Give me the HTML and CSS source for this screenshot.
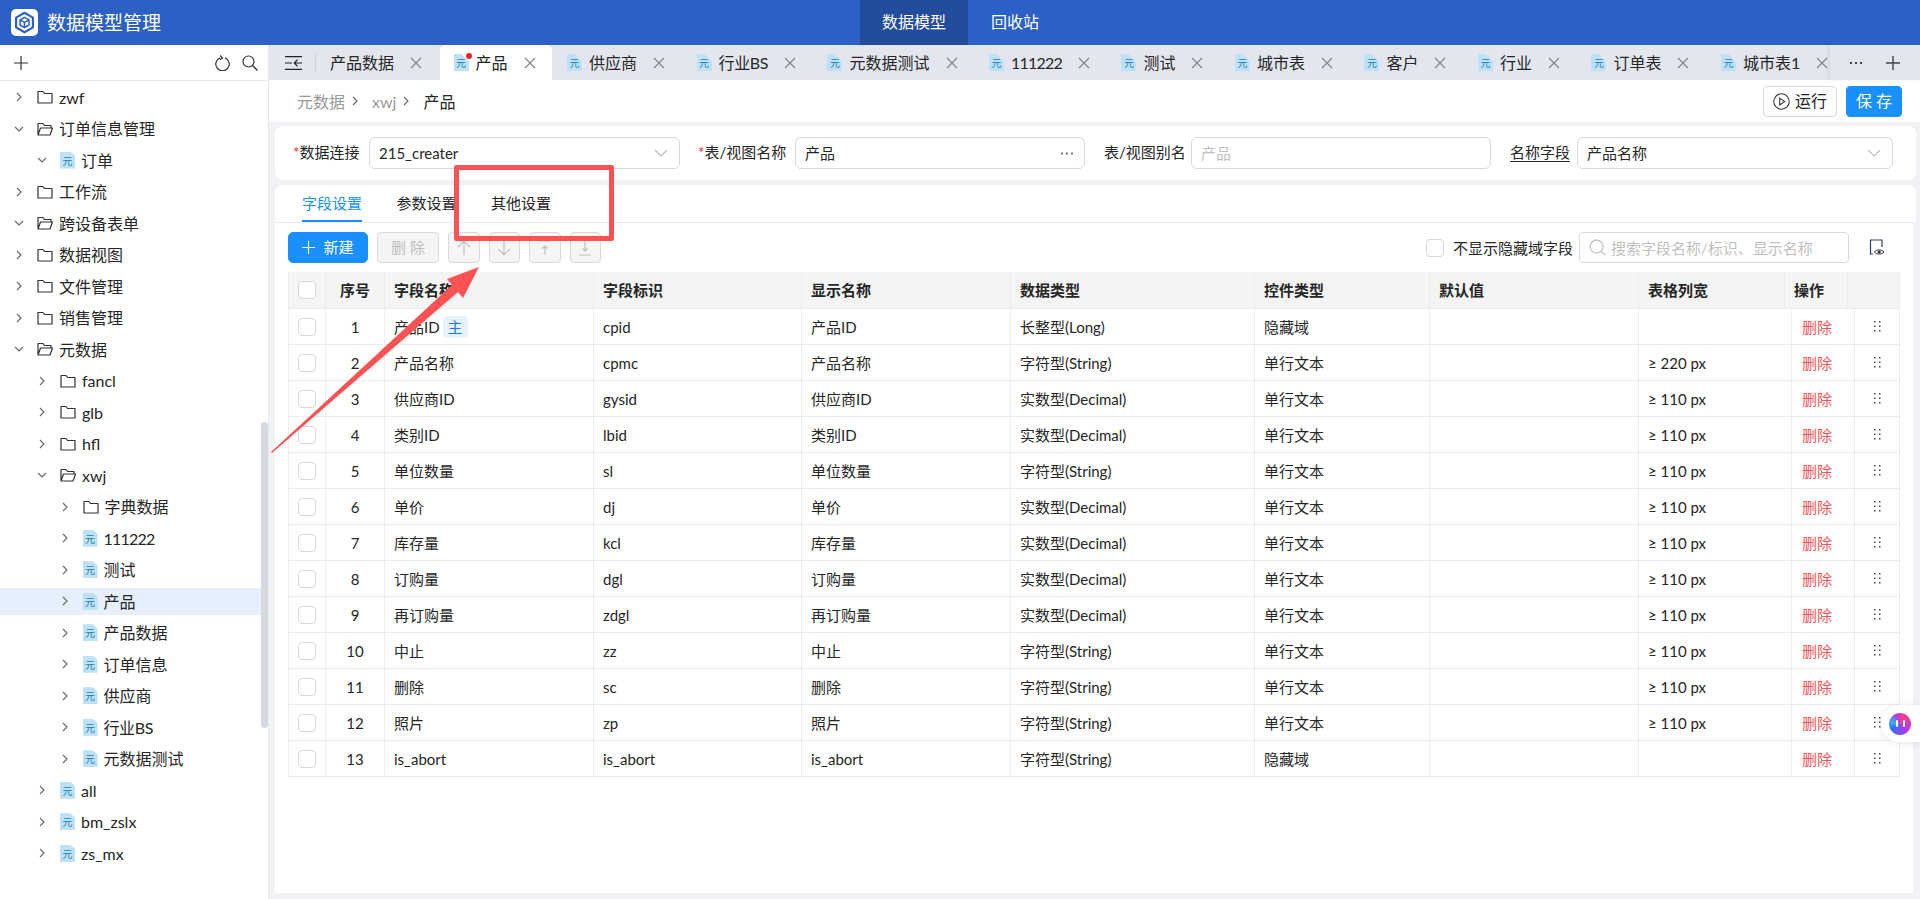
FILE: index.html
```html
<!DOCTYPE html>
<html lang="zh">
<head>
<meta charset="utf-8">
<title>数据模型管理</title>
<link rel="stylesheet" href="styles.css">
</head>
<body>
<svg class="defs" width="0" height="0">
  <symbol id="r" viewBox="0 0 6 10"><path d="M1 1l4 4-4 4" fill="none" stroke="#666" stroke-width="1.1"/></symbol>
  <symbol id="d" viewBox="0 0 10 6"><path d="M1 1l4 4 4-4" fill="none" stroke="#666" stroke-width="1.1"/></symbol>
  <symbol id="f" viewBox="0 0 16 14"><path d="M1 13V1.5h5l1.5 2H15V13z" fill="none" stroke="#333" stroke-width="1.2" stroke-linejoin="round"/></symbol>
  <symbol id="o" viewBox="0 0 16 14"><path d="M1 13V1.5h5l1.5 2H14V6M1 13l2.5-7H15.500l-2.500 7z" fill="none" stroke="#333" stroke-width="1.2" stroke-linejoin="round"/></symbol>
  <symbol id="x" viewBox="0 0 12 12"><path d="M1 1l10 10M11 1L1 11" fill="none" stroke="#858585" stroke-width="1.2"/></symbol>
  <symbol id="dots" viewBox="0 0 8 12"><path d="M1 1h1.500v1.500H1zM6 1h1.500v1.500H6zM1 5.500h1.500V7H1zM6 5.500h1.500V7H6zM1 10h1.500v1.500H1zM6 10h1.500v1.500H6z" fill="#444"/></symbol>
  <symbol id="cv" viewBox="0 0 14 8"><path d="M1 1l6 6 6-6" fill="none" stroke="#bbb" stroke-width="1.100"/></symbol>
</svg>

<header class="top">
  <div class="brand">
    <svg class="logo" viewBox="0 0 27 27">
      <rect width="27" height="27" rx="5" fill="#fff"/>
      <path d="M13.500 3.800l8.400 4.800v9.800l-8.400 4.800-8.400-4.800V8.600z" fill="none" stroke="#2b60c4" stroke-width="2.200" stroke-linejoin="round"/>
      <path d="M13.500 8.300l4.500 2.500v5.200l-4.500 2.600L9 16V10.800zM9 10.800l4.500 2.600 4.500-2.600M13.500 13.400v5.200" fill="none" stroke="#2b60c4" stroke-width="1.500" stroke-linejoin="round"/>
    </svg>
    <span class="title">数据模型管理</span>
  </div>
  <nav class="nav"><a class="nav-i on">数据模型</a><a class="nav-i">回收站</a></nav>
</header>

<div class="app">
  <aside class="side">
    <div class="side-head">
      <svg class="ic14" viewBox="0 0 14 14"><path d="M7 0v14M0 7h14" stroke="#333" stroke-width="1.200"/></svg>
      <span class="fill"></span>
      <svg class="ic16" viewBox="0 0 16 16"><path d="M5 2.900a6.700 6.700 0 1 0 5 0M5.200 0.500L7.500 3 5 4.800" fill="none" stroke="#333" stroke-width="1.200"/></svg>
      <svg class="ic16" viewBox="0 0 16 16"><circle cx="6.500" cy="6.500" r="5.500" fill="none" stroke="#333" stroke-width="1.200"/><path d="M10.500 10.500l5 5" stroke="#333" stroke-width="1.400"/></svg>
    </div>
    <ul class="tree">
      <li class="n l0"><svg class="ch"><use href="#r"/></svg><svg class="fo"><use href="#f"/></svg><span>zwf</span></li>
      <li class="n l0"><svg class="ch dn"><use href="#d"/></svg><svg class="fo"><use href="#o"/></svg><span>订单信息管理</span></li>
      <li class="n l1"><svg class="ch dn"><use href="#d"/></svg><i class="yuan">元</i><span>订单</span></li>
      <li class="n l0"><svg class="ch"><use href="#r"/></svg><svg class="fo"><use href="#f"/></svg><span>工作流</span></li>
      <li class="n l0"><svg class="ch dn"><use href="#d"/></svg><svg class="fo"><use href="#o"/></svg><span>跨设备表单</span></li>
      <li class="n l0"><svg class="ch"><use href="#r"/></svg><svg class="fo"><use href="#f"/></svg><span>数据视图</span></li>
      <li class="n l0"><svg class="ch"><use href="#r"/></svg><svg class="fo"><use href="#f"/></svg><span>文件管理</span></li>
      <li class="n l0"><svg class="ch"><use href="#r"/></svg><svg class="fo"><use href="#f"/></svg><span>销售管理</span></li>
      <li class="n l0"><svg class="ch dn"><use href="#d"/></svg><svg class="fo"><use href="#o"/></svg><span>元数据</span></li>
      <li class="n l1"><svg class="ch"><use href="#r"/></svg><svg class="fo"><use href="#f"/></svg><span>fancl</span></li>
      <li class="n l1"><svg class="ch"><use href="#r"/></svg><svg class="fo"><use href="#f"/></svg><span>glb</span></li>
      <li class="n l1"><svg class="ch"><use href="#r"/></svg><svg class="fo"><use href="#f"/></svg><span>hfl</span></li>
      <li class="n l1"><svg class="ch dn"><use href="#d"/></svg><svg class="fo"><use href="#o"/></svg><span>xwj</span></li>
      <li class="n l2"><svg class="ch"><use href="#r"/></svg><svg class="fo"><use href="#f"/></svg><span>字典数据</span></li>
      <li class="n l2"><svg class="ch"><use href="#r"/></svg><i class="yuan">元</i><span class="dg">111222</span></li>
      <li class="n l2"><svg class="ch"><use href="#r"/></svg><i class="yuan">元</i><span>测试</span></li>
      <li class="n l2 sel"><svg class="ch"><use href="#r"/></svg><i class="yuan">元</i><span>产品</span></li>
      <li class="n l2"><svg class="ch"><use href="#r"/></svg><i class="yuan">元</i><span>产品数据</span></li>
      <li class="n l2"><svg class="ch"><use href="#r"/></svg><i class="yuan">元</i><span>订单信息</span></li>
      <li class="n l2"><svg class="ch"><use href="#r"/></svg><i class="yuan">元</i><span>供应商</span></li>
      <li class="n l2"><svg class="ch"><use href="#r"/></svg><i class="yuan">元</i><span class="ns">行业BS</span></li>
      <li class="n l2"><svg class="ch"><use href="#r"/></svg><i class="yuan">元</i><span>元数据测试</span></li>
      <li class="n l1"><svg class="ch"><use href="#r"/></svg><i class="yuan">元</i><span>all</span></li>
      <li class="n l1"><svg class="ch"><use href="#r"/></svg><i class="yuan">元</i><span>bm_zslx</span></li>
      <li class="n l1"><svg class="ch"><use href="#r"/></svg><i class="yuan">元</i><span>zs_mx</span></li>
    </ul>
    <div class="thumb"></div>
  </aside>

  <main class="main">
    <div class="tabbar">
      <div class="tb-left">
        <svg class="collapse" viewBox="0 0 17 14"><path d="M0 .700h17M0 13.300h17M0 7h7M9.500 7H17M12.500 3.700L9.300 7l3.200 3.300" fill="none" stroke="#222" stroke-width="1.200"/></svg>
        <span class="tb-sep"></span>
      </div>
      <div class="tabs">
        <div class="tab first"><span>产品数据</span><svg class="cl"><use href="#x"/></svg></div>
        <div class="tab on"><i class="yuan"><b class="dot"></b>元</i><span>产品</span><svg class="cl"><use href="#x"/></svg></div>
        <div class="tab"><i class="yuan">元</i><span>供应商</span><svg class="cl"><use href="#x"/></svg></div>
        <div class="tab"><i class="yuan">元</i><span class="ns">行业BS</span><svg class="cl"><use href="#x"/></svg></div>
        <div class="tab"><i class="yuan">元</i><span>元数据测试</span><svg class="cl"><use href="#x"/></svg></div>
        <div class="tab"><i class="yuan">元</i><span class="dg">111222</span><svg class="cl"><use href="#x"/></svg></div>
        <div class="tab"><i class="yuan">元</i><span>测试</span><svg class="cl"><use href="#x"/></svg></div>
        <div class="tab"><i class="yuan">元</i><span>城市表</span><svg class="cl"><use href="#x"/></svg></div>
        <div class="tab"><i class="yuan">元</i><span>客户</span><svg class="cl"><use href="#x"/></svg></div>
        <div class="tab"><i class="yuan">元</i><span>行业</span><svg class="cl"><use href="#x"/></svg></div>
        <div class="tab"><i class="yuan">元</i><span>订单表</span><svg class="cl"><use href="#x"/></svg></div>
        <div class="tab"><i class="yuan">元</i><span>城市表1</span><svg class="cl"><use href="#x"/></svg></div>
      </div>
      <div class="tb-right">
        <svg class="more" viewBox="0 0 14 4"><path d="M1 1h2v2H1zM6 1h2v2H6zM11 1h2v2h-2z" fill="#444"/></svg>
        <svg class="ic14" viewBox="0 0 14 14"><path d="M7 0v14M0 7h14" stroke="#444" stroke-width="1.400"/></svg>
      </div>
    </div>

    <div class="crumbs">
      <span class="c-g">元数据</span><svg class="c-ch"><use href="#r"/></svg>
      <span class="c-g">xwj</span><svg class="c-ch"><use href="#r"/></svg>
      <span class="c-d">产品</span>
      <span class="fill"></span>
      <button class="btn run"><svg class="play" viewBox="0 0 16 16"><circle cx="8" cy="8" r="7.300" fill="none" stroke="#333"/><path d="M6.300 4.800l4.700 3.200-4.700 3.200z" fill="none" stroke="#333"/></svg>运行</button>
      <button class="btn save">保 存</button>
    </div>

    <section class="form">
      <label class="lab lw1"><em>*</em>数据连接</label>
      <div class="inp w1"><span>215_creater</span><svg class="cv"><use href="#cv"/></svg></div>
      <label class="lab lw2"><em>*</em>表/视图名称</label>
      <div class="inp w2"><span>产品</span><svg class="el" viewBox="0 0 12 3"><path d="M0 .500h2v2H0zM5 .500h2v2H5zM10 .500h2v2h-2z" fill="#777"/></svg></div>
      <label class="lab lw3">表/视图别名</label>
      <div class="inp w3"><span class="ph">产品</span></div>
      <label class="lab lw4"><u>名称字段</u></label>
      <div class="inp w4"><span>产品名称</span><svg class="cv"><use href="#cv"/></svg></div>
    </section>

    <section class="panel">
      <div class="ptabs">
        <a class="pt on">字段设置</a><a class="pt">参数设置</a><a class="pt">其他设置</a>
      </div>
      <div class="pbody">
        <div class="tools">
          <button class="btn add"><svg class="ic13" viewBox="0 0 14 14"><path d="M7 0v14M0 7h14" stroke="#fff" stroke-width="1.300"/></svg>新建</button>
          <button class="btn dis del">删 除</button>
          <button class="btn dis sq"><svg class="ic16" viewBox="0 0 16 16"><path d="M8 15V1M2 7l6-6 6 6" fill="none" stroke="#bfbfbf" stroke-width="1.200"/></svg></button>
          <button class="btn dis sq"><svg class="ic16" viewBox="0 0 16 16"><path d="M8 1v14M2 9l6 6 6-6" fill="none" stroke="#bfbfbf" stroke-width="1.200"/></svg></button>
          <button class="btn dis sq"><svg class="ic16" viewBox="0 0 16 16"><path d="M2 1h12M8 15V6M5.500 8.500L8 6l2.500 2.500" fill="none" stroke="#bfbfbf" stroke-width="1.200"/></svg></button>
          <button class="btn dis sq"><svg class="ic16" viewBox="0 0 16 16"><path d="M2 15h12M8 1v10M5.500 8.500L8 11l2.500-2.500" fill="none" stroke="#bfbfbf" stroke-width="1.200"/></svg></button>
          <span class="fill"></span>
          <i class="cb"></i><span class="hide-l">不显示隐藏域字段</span>
          <div class="search">
            <svg class="s-ic" viewBox="0 0 18 18"><circle cx="8" cy="8" r="6.800" fill="none" stroke="#bfbfbf" stroke-width="1.200"/><path d="M13 13l4 4" stroke="#bfbfbf" stroke-width="1.300"/></svg>
            <span>搜索字段名称/标识、显示名称</span>
          </div>
          <svg class="view" viewBox="0 0 16 17"><path d="M4 15H1.500V1h11.500v7" fill="none" stroke="#2c3e66" stroke-width="1.200"/><path d="M5.500 13c1.600-2.700 7.400-2.700 9.500 0-2.100 2.700-7.900 2.700-9.500 0z" fill="#fff" stroke="#333"/><circle cx="10.200" cy="13" r="1.600" fill="#333"/></svg>
        </div>

        <div class="grid">
          <div class="row head">
            <div class="c ck"><i class="cb"></i></div><div class="c ctr">序号</div><div class="c">字段名称</div><div class="c">字段标识</div><div class="c">显示名称</div><div class="c">数据类型</div><div class="c">控件类型</div><div class="c">默认值</div><div class="c">表格列宽</div><div class="c">操作</div><div class="c"></div>
          </div>
          <div class="row"><div class="c ck"><i class="cb"></i></div><div class="c ctr">1</div><div class="c">产品ID<b class="zhu">主</b></div><div class="c">cpid</div><div class="c">产品ID</div><div class="c">长整型(Long)</div><div class="c">隐藏域</div><div class="c"></div><div class="c"></div><div class="c del-t">删除</div><div class="c ctr"><svg class="dr"><use href="#dots"/></svg></div></div>
          <div class="row"><div class="c ck"><i class="cb"></i></div><div class="c ctr">2</div><div class="c">产品名称</div><div class="c">cpmc</div><div class="c">产品名称</div><div class="c">字符型(String)</div><div class="c">单行文本</div><div class="c"></div><div class="c">≥ 220 px</div><div class="c del-t">删除</div><div class="c ctr"><svg class="dr"><use href="#dots"/></svg></div></div>
          <div class="row"><div class="c ck"><i class="cb"></i></div><div class="c ctr">3</div><div class="c">供应商ID</div><div class="c">gysid</div><div class="c">供应商ID</div><div class="c">实数型(Decimal)</div><div class="c">单行文本</div><div class="c"></div><div class="c">≥ 110 px</div><div class="c del-t">删除</div><div class="c ctr"><svg class="dr"><use href="#dots"/></svg></div></div>
          <div class="row"><div class="c ck"><i class="cb"></i></div><div class="c ctr">4</div><div class="c">类别ID</div><div class="c">lbid</div><div class="c">类别ID</div><div class="c">实数型(Decimal)</div><div class="c">单行文本</div><div class="c"></div><div class="c">≥ 110 px</div><div class="c del-t">删除</div><div class="c ctr"><svg class="dr"><use href="#dots"/></svg></div></div>
          <div class="row"><div class="c ck"><i class="cb"></i></div><div class="c ctr">5</div><div class="c">单位数量</div><div class="c">sl</div><div class="c">单位数量</div><div class="c">字符型(String)</div><div class="c">单行文本</div><div class="c"></div><div class="c">≥ 110 px</div><div class="c del-t">删除</div><div class="c ctr"><svg class="dr"><use href="#dots"/></svg></div></div>
          <div class="row"><div class="c ck"><i class="cb"></i></div><div class="c ctr">6</div><div class="c">单价</div><div class="c">dj</div><div class="c">单价</div><div class="c">实数型(Decimal)</div><div class="c">单行文本</div><div class="c"></div><div class="c">≥ 110 px</div><div class="c del-t">删除</div><div class="c ctr"><svg class="dr"><use href="#dots"/></svg></div></div>
          <div class="row"><div class="c ck"><i class="cb"></i></div><div class="c ctr">7</div><div class="c">库存量</div><div class="c">kcl</div><div class="c">库存量</div><div class="c">实数型(Decimal)</div><div class="c">单行文本</div><div class="c"></div><div class="c">≥ 110 px</div><div class="c del-t">删除</div><div class="c ctr"><svg class="dr"><use href="#dots"/></svg></div></div>
          <div class="row"><div class="c ck"><i class="cb"></i></div><div class="c ctr">8</div><div class="c">订购量</div><div class="c">dgl</div><div class="c">订购量</div><div class="c">实数型(Decimal)</div><div class="c">单行文本</div><div class="c"></div><div class="c">≥ 110 px</div><div class="c del-t">删除</div><div class="c ctr"><svg class="dr"><use href="#dots"/></svg></div></div>
          <div class="row"><div class="c ck"><i class="cb"></i></div><div class="c ctr">9</div><div class="c">再订购量</div><div class="c">zdgl</div><div class="c">再订购量</div><div class="c">实数型(Decimal)</div><div class="c">单行文本</div><div class="c"></div><div class="c">≥ 110 px</div><div class="c del-t">删除</div><div class="c ctr"><svg class="dr"><use href="#dots"/></svg></div></div>
          <div class="row"><div class="c ck"><i class="cb"></i></div><div class="c ctr">10</div><div class="c">中止</div><div class="c">zz</div><div class="c">中止</div><div class="c">字符型(String)</div><div class="c">单行文本</div><div class="c"></div><div class="c">≥ 110 px</div><div class="c del-t">删除</div><div class="c ctr"><svg class="dr"><use href="#dots"/></svg></div></div>
          <div class="row"><div class="c ck"><i class="cb"></i></div><div class="c ctr">11</div><div class="c">删除</div><div class="c">sc</div><div class="c">删除</div><div class="c">字符型(String)</div><div class="c">单行文本</div><div class="c"></div><div class="c">≥ 110 px</div><div class="c del-t">删除</div><div class="c ctr"><svg class="dr"><use href="#dots"/></svg></div></div>
          <div class="row"><div class="c ck"><i class="cb"></i></div><div class="c ctr">12</div><div class="c">照片</div><div class="c">zp</div><div class="c">照片</div><div class="c">字符型(String)</div><div class="c">单行文本</div><div class="c"></div><div class="c">≥ 110 px</div><div class="c del-t">删除</div><div class="c ctr"><svg class="dr"><use href="#dots"/></svg></div></div>
          <div class="row"><div class="c ck"><i class="cb"></i></div><div class="c ctr">13</div><div class="c">is_abort</div><div class="c">is_abort</div><div class="c">is_abort</div><div class="c">字符型(String)</div><div class="c">隐藏域</div><div class="c"></div><div class="c"></div><div class="c del-t">删除</div><div class="c ctr"><svg class="dr"><use href="#dots"/></svg></div></div>
        </div>
      </div>
    </section>
  </main>
</div>

<div class="ai-pill"><span class="ai-ball"><i></i><i></i></span></div>
<div class="mark-box"></div>
<svg class="mark-arrow" viewBox="0 0 1920 899"><polygon points="479,267 447,279 452,285 271,452 272,453 458,292 463,298" fill="#fb5254"/></svg>
</body>
</html>
```
FILE: styles.css
```css
* { box-sizing: border-box; }
html, body { margin: 0; height: 899px; overflow: hidden; }
body {
  font-family: "Lato", "Noto Sans CJK SC", sans-serif;
  font-size: 15px;
  color: #262626;
  background: #f0f2f6;
  position: relative;
}
.defs { position: absolute; }
.fill { flex: 1; }
i, em, b { font-style: normal; font-weight: normal; }
.dg { letter-spacing: -.8px; }
.ns { letter-spacing: -.4px; }

/* top bar */
.top { height: 45px; background: #2b60c4; display: flex; color: #fff; position: relative; }
.brand { display: flex; align-items: center; padding-left: 11px; }
.logo { width: 27px; height: 27px; }
.title { font-size: 19px; margin-left: 9px; line-height: 27px; }
.nav { position: absolute; left: 860px; top: 0; height: 45px; display: flex; }
.nav-i { padding: 0 23px; line-height: 43px; font-size: 16px; }
.nav-i.on { padding: 0 22px; background: #244c9c; }

.app { display: flex; height: 854px; }

/* sidebar */
.side { width: 269px; flex: none; background: #fff; border-right: 1px solid #e8e8e8; position: relative; }
.side-head { height: 36px; border-bottom: 1px solid #e8e8e8; display: flex; align-items: center; padding: 0 10px 0 14px; gap: 11px; }
.ic14 { width: 14px; height: 14px; }
.ic16 { width: 16px; height: 16px; }
.ic13 { width: 13px; height: 13px; }
.tree { list-style: none; margin: 0; padding: 2.5px 7px 0 0; font-size: 16px; }
.n { height: 27px; margin-bottom: 4.53px; display: flex; align-items: center; line-height: 27px; white-space: nowrap; }
.l0 { padding-left: 16px; }
.l1 { padding-left: 39px; }
.l2 { padding-left: 61.5px; }
.sel { background: #e6effc; }
.ch { width: 6px; height: 10px; margin-right: 15px; flex: none; }
.ch.dn { width: 10px; height: 6px; margin-left: -2px; margin-right: 13px; }
.fo { width: 16px; height: 14px; margin-right: 6px; flex: none; }
.yuan {
  display: inline-block; position: relative; flex: none;
  width: 15px; height: 17px; margin-right: 6px;
  background: #bde1f6; color: #1f7fb8;
  font-size: 10px; line-height: 19px; text-align: center;
  clip-path: polygon(0 0, 68% 0, 100% 24%, 100% 100%, 0 100%);
}
.thumb { position: absolute; left: 261px; top: 377px; width: 7px; height: 306px; background: #d6dae0; border-radius: 4px; }

/* main */
.main { flex: 1; min-width: 0; display: flex; flex-direction: column; padding-bottom: 6px; }
.tabbar { height: 35px; background: #e3e6ee; display: flex; flex: none; }
.tb-left { width: 61px; flex: none; display: flex; align-items: center; padding-left: 16px; }
.collapse { width: 17px; height: 14px; }
.tb-sep { width: 1px; height: 20px; background: #ccd0d8; margin-left: 13px; }
.tabs { width: 1500px; flex: none; display: flex; gap: 1.5px; overflow: hidden; }
.tab { flex: none; height: 35px; padding: 0 16px 0 14px; display: flex; align-items: center; font-size: 16px; line-height: 33px; white-space: nowrap; }
.tab.first { padding-left: 0; }
.tab.on { background: #fff; border-radius: 6px 6px 0 0; }
.tab .yuan { margin-right: 7px; clip-path: none; background: linear-gradient(225deg, #e3e6ee 22%, #bde1f6 23%); }
.tab.on .yuan { background: linear-gradient(225deg, #fff 22%, #bde1f6 23%); }
.cl { width: 12px; height: 12px; margin-left: 16px; flex: none; }
.dot { position: absolute; right: -3px; top: -1px; width: 6px; height: 6px; border-radius: 50%; background: #f5222d; }
.tab.on .yuan { overflow: visible; }
.tb-right { flex: 1; display: flex; align-items: center; gap: 23px; padding-left: 19px; box-shadow: -2px 0 3px rgba(0,0,0,.06); position: relative; }
.more { width: 14px; height: 4px; }

/* breadcrumbs */
.crumbs { height: 42px; flex: none; background: #fff; display: flex; align-items: center; padding: 0 18px 0 28px; font-size: 16px; }
.c-g { color: #999; }
.c-d { color: #262626; }
.c-ch { width: 6px; height: 10px; margin: 0 14px 0 7px; }
.btn { font-family: inherit; font-size: 16px; border-radius: 4px; height: 31px; padding: 0; display: inline-flex; align-items: center; justify-content: center; border: 1px solid #d9d9d9; background: #fff; color: #262626; line-height: 1; }
.run { width: 74px; gap: 5px; margin-right: 9px; }
.play { width: 17px; height: 17px; }
.save { width: 56px; background: #1890ff; border-color: #1890ff; color: #fff; }

/* form card */
.form { height: 54px; flex: none; margin: 4px 4px 5px 6px; background: #fff; border-radius: 8px; display: flex; align-items: center; padding-left: 18px; }
.lab { white-space: nowrap; padding-bottom: 3px; line-height: 20px; flex: none; }
.lw1 { width: 76px; }
.lw2 { width: 97px; margin-left: 18px; }
.lw3 { width: 87px; margin-left: 19px; }
.lw4 { width: 67px; margin-left: 19px; }
.lab em { color: #f5222d; }
.lab u { text-underline-offset: 3px; }
.inp { height: 32px; border: 1px solid #d9d9d9; border-radius: 6px; display: flex; align-items: center; padding: 0 11px 0 9px; justify-content: space-between; line-height: 28px; }
.w1 { width: 311px; }
.w2 { width: 290px; }
.w3 { width: 300px; }
.w4 { width: 316px; }
.ph { color: #bfbfbf; }
.cv { width: 14px; height: 8px; }
.el { width: 12px; height: 3px; }

/* panel */
.panel { flex: 1; min-height: 0; margin: 0 4px 0 6px; background: #fff; border-radius: 8px 8px 0 0; display: flex; flex-direction: column; }
.ptabs { height: 38px; flex: none; border-bottom: 1px solid #ececec; display: flex; gap: 34.500px; padding-left: 27px; }
.pt { line-height: 36px; height: 37px; color: #262626; }
.pt.on { color: #1890ff; border-bottom: 2px solid #1890ff; }
.pbody { flex: 1; border-right: 3px solid #f0f2f6; padding: 9px 13px 0 13px; }
.tools { display: flex; align-items: center; gap: 9px; height: 31px; }
.add { width: 80px; background: #1890ff; border-color: #1890ff; color: #fff; font-size: 15px; gap: 8px; border-radius: 5px; }
.dis { background: #f5f5f5; color: #bfbfbf; }
.del { width: 62px; font-size: 15px; }
.sq { width: 31.5px; }
.cb { display: inline-block; width: 18px; height: 18px; background: #fff; border: 1px solid #d9d9d9; border-radius: 4px; flex: none; }
.hide-l { white-space: nowrap; }
.search { width: 270px; height: 31px; border: 1px solid #d9d9d9; border-radius: 4px; display: flex; align-items: center; padding-left: 9px; gap: 5px; color: #bfbfbf; margin-left: -3px; margin-right: 11px; white-space: nowrap; overflow: hidden; }
.s-ic { width: 17px; height: 17px; flex: none; }
.view { width: 16px; height: 17px; margin-right: 15px; }

/* table */
.grid { margin-top: 9px; border-bottom: 1px solid #ececec; border-right: 1px solid #ececec; }
.row { display: grid; height: 36px; grid-template-columns: 37px 59px 209px 208px 209px 244px 175px 209px 153px 63px 1fr; }
.row.head { grid-template-columns: 37px 59px 209px 208px 209px 244px 175px 209px 146px 63px 1fr; background: #f4f4f5; font-weight: 600; }
.c { border-left: 1px solid #ececec; border-top: 1px solid #ececec; padding-left: 9px; display: flex; align-items: center; white-space: nowrap; min-width: 0; line-height: 20px; }
.ck { justify-content: center; padding: 0; }
.ctr { justify-content: center; padding: 0; }
.head .c { border-top: 0; }
.del-t { color: #f5565a; padding-left: 10px; }
.dr { width: 8px; height: 12px; margin-top: -2px; }
.zhu { width: 25px; height: 22px; line-height: 22px; text-align: center; margin-left: 3px; background: #e6f3ff; color: #1677ff; border-radius: 4px; }

/* overlays */
.ai-pill { position: absolute; left: 1881px; top: 705px; width: 39px; height: 37px; background: #fff; border-radius: 19px 0 0 19px; box-shadow: 0 1px 8px rgba(0,0,0,.1); display: flex; align-items: center; padding-left: 8px; }
.ai-ball { width: 22px; height: 22px; border-radius: 50%; background: conic-gradient(from 20deg, #ff3b7f, #a93bf0 120deg, #3b6ef5 220deg, #3bb0f5 260deg, #b13be0 320deg, #ff3b7f); display: flex; align-items: center; justify-content: center; gap: 5px; filter: blur(.4px); }
.ai-ball i { width: 2px; height: 7px; background: #fff; border-radius: 1px; }
.mark-box { position: absolute; left: 454px; top: 165px; width: 160px; height: 76px; border: 5px solid #fb5254; border-radius: 2px; pointer-events: none; }
.mark-arrow { position: absolute; left: 0; top: 0; width: 1920px; height: 899px; pointer-events: none; }
```
